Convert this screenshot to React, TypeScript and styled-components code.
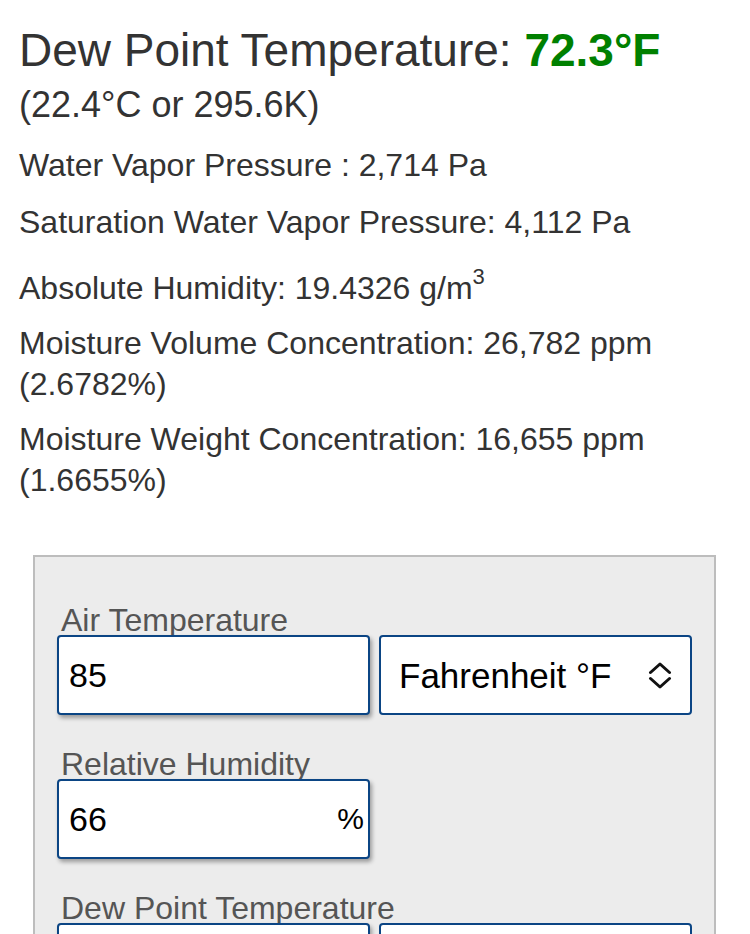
import styled, { createGlobalStyle } from "styled-components";

const GlobalStyle = createGlobalStyle`
  html, body {
    margin: 0;
    padding: 0;
    background: #fff;
  }

  body {
    font-family: "Liberation Sans", Arial, Helvetica, sans-serif;
    color: #333;
  }
`;

function Chevrons() {
  return (
    <svg width="24" height="27" viewBox="0 0 24 27" fill="none">
      <path
        d="M2.5 10.5 L12 2 L21.5 10.5 M2.5 16.5 L12 25 L21.5 16.5"
        stroke="#111"
        strokeWidth="3"
        strokeLinecap="round"
        strokeLinejoin="round"
      />
    </svg>
  );
}

type FieldProps = {
  label: string;
  value: string;
  unit?: string;
  options?: string[];
};

function Field({ label, value, unit, options }: FieldProps) {
  return (
    <StyledField>
      <label>{label}</label>
      <div className="row">
        <InputBox>
          <input type="text" defaultValue={value} />
          {unit && <span className="unit">{unit}</span>}
        </InputBox>
        {options && (
          <SelectBox>
            <select defaultValue={options[0]}>
              {options.map((o) => (
                <option key={o}>{o}</option>
              ))}
            </select>
            <Chevrons />
          </SelectBox>
        )}
      </div>
    </StyledField>
  );
}

const units = ["Fahrenheit °F", "Celsius °C", "Kelvin K"];

export default function App() {
  return (
    <>
      <GlobalStyle />
      <Page>
        <Title>
          Dew Point Temperature: <span className="value">72.3°F</span>
        </Title>
        <Subtitle>(22.4°C or 295.6K)</Subtitle>

        <Result $gap={18}>Water Vapor Pressure : 2,714 Pa</Result>
        <Result $gap={16}>Saturation Water Vapor Pressure: 4,112 Pa</Result>
        <Result $gap={25}>
          Absolute Humidity: 19.4326 g/m<sup>3</sup>
        </Result>
        <Result $gap={14}>Moisture Volume Concentration: 26,782 ppm (2.6782%)</Result>
        <Result $gap={14}>Moisture Weight Concentration: 16,655 ppm (1.6655%)</Result>

        <Panel>
          <Field label="Air Temperature" value="85" options={units} />
          <Field label="Relative Humidity" value="66" unit="%" />
          <Field label="Dew Point Temperature" value="" options={units} />
        </Panel>
      </Page>
    </>
  );
}

const Page = styled.main`
  padding: 23px 19px 40px;
`;

const Title = styled.h1`
  margin: 0;
  font-size: 46px;
  line-height: 54px;
  font-weight: normal;
  color: #333;

  & span.value {
    color: #008000;
    font-weight: bold;
  }
`;

const Subtitle = styled.div`
  margin-top: 6px;
  font-size: 36px;
  line-height: 44px;
  color: #333;
`;

const Result = styled.p<{ $gap: number }>`
  margin: ${(p) => p.$gap}px 0 0;
  font-size: 32px;
  line-height: 41px;
  color: #333;

  & sup {
    font-size: 22px;
    line-height: 0;
    vertical-align: 15px;
  }
`;

const Panel = styled.section`
  margin: 54px 15px 0 14px;
  padding: 45px 22px 40px;
  background: #ececec;
  border: 2px solid #bdbdbd;
`;

const StyledField = styled.div`
  margin-bottom: 31px;

  & label {
    display: block;
    padding: 3px 0 0 4px;
    font-size: 32px;
    line-height: 30px;
    color: #555;
  }

  & div.row {
    display: grid;
    grid-template-columns: minmax(0, 1fr) minmax(0, 1fr);
    gap: 9px;
  }
`;

const InputBox = styled.div`
  display: flex;
  align-items: center;
  min-width: 0;
  height: 80px;
  box-sizing: border-box;
  background: #fff;
  border: 2px solid #0b4584;
  border-radius: 4px;
  box-shadow: 2px 3px 4px rgba(0, 0, 0, 0.35);

  & input {
    flex: 1;
    width: 0;
    min-width: 0;
    height: 100%;
    padding: 0 10px;
    border: none;
    outline: none;
    background: transparent;
    font-family: "Liberation Sans", Arial, sans-serif;
    font-size: 34px;
    color: #000;
  }

  & span.unit {
    padding-right: 4px;
    font-size: 30px;
    color: #000;
  }
`;

const SelectBox = styled.div`
  display: flex;
  align-items: center;
  min-width: 0;
  height: 80px;
  box-sizing: border-box;
  padding-right: 18px;
  background: #fff;
  border: 2px solid #0b4584;
  border-radius: 4px;

  & select {
    flex: 1;
    width: 0;
    min-width: 0;
    height: 100%;
    padding: 0 0 0 18px;
    border: none;
    outline: none;
    background: transparent;
    appearance: none;
    font-family: "Liberation Sans", Arial, sans-serif;
    font-size: 35px;
    color: #000;
  }
`;
